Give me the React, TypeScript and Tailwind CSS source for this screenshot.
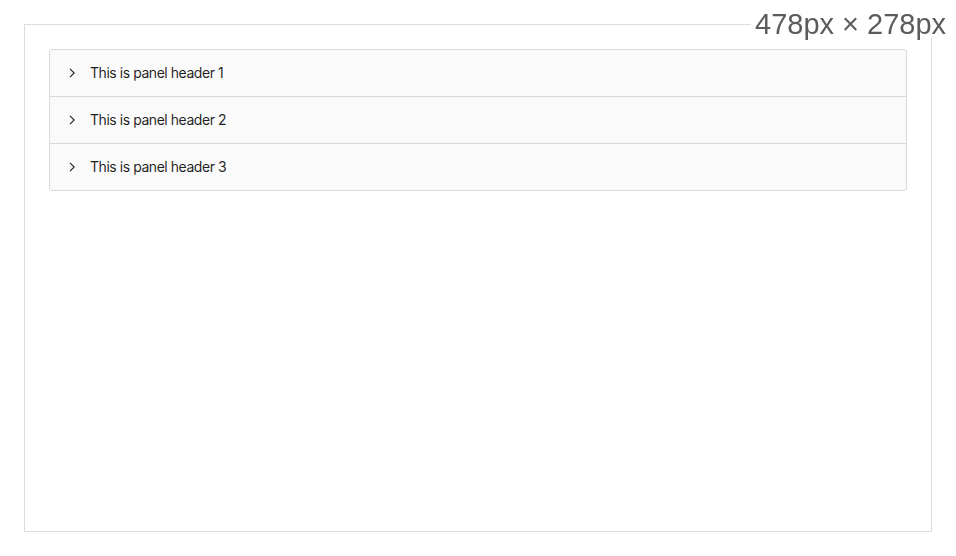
import { useState } from "react";

const panels = [
  { key: "1", title: "This is panel header 1" },
  { key: "2", title: "This is panel header 2" },
  { key: "3", title: "This is panel header 3" },
];

function Chevron({ open }: { open: boolean }) {
  return (
    <svg
      viewBox="0 0 12 12"
      className={open ? "h-3 w-3 rotate-90 transition-transform" : "h-3 w-3 transition-transform"}
      fill="none"
      stroke="currentColor"
      strokeWidth="1.1"
    >
      <path d="M4 1.8 8.2 6 4 10.2" />
    </svg>
  );
}

export default function App() {
  const [open, setOpen] = useState<string | null>(null);

  return (
    <div className="relative h-[556px] w-[956px] overflow-hidden bg-white p-6 font-['Inter',sans-serif]">
      <div className="h-full w-full border border-[#dddddd] p-6">
        <div className="overflow-hidden rounded-[3px] border border-[#d9d9d9] bg-[#fafafa]">
          {panels.map((p, i) => (
            <div key={p.key} className={i > 0 ? "border-t border-[#d9d9d9]" : ""}>
              <button
                onClick={() => setOpen(open === p.key ? null : p.key)}
                className="flex w-full items-center gap-3 px-4 py-3 text-left text-sm leading-[22px] tracking-[-0.45px] text-[rgba(0,0,0,0.88)]"
              >
                <Chevron open={open === p.key} />
                <span>{p.title}</span>
              </button>
              {open === p.key && (
                <div className="border-t border-[#d9d9d9] bg-white px-4 py-4 text-sm text-[rgba(0,0,0,0.88)]">
                  A dog is a type of domesticated animal.
                </div>
              )}
            </div>
          ))}
        </div>
      </div>
      <div className="absolute left-[751px] top-[10px] whitespace-nowrap bg-white pl-1 pr-3 font-['Liberation_Sans',sans-serif] text-[29px] leading-[28px] text-[#5c5c5c] blur-[0.7px]">
        478px × 278px
      </div>
    </div>
  );
}
